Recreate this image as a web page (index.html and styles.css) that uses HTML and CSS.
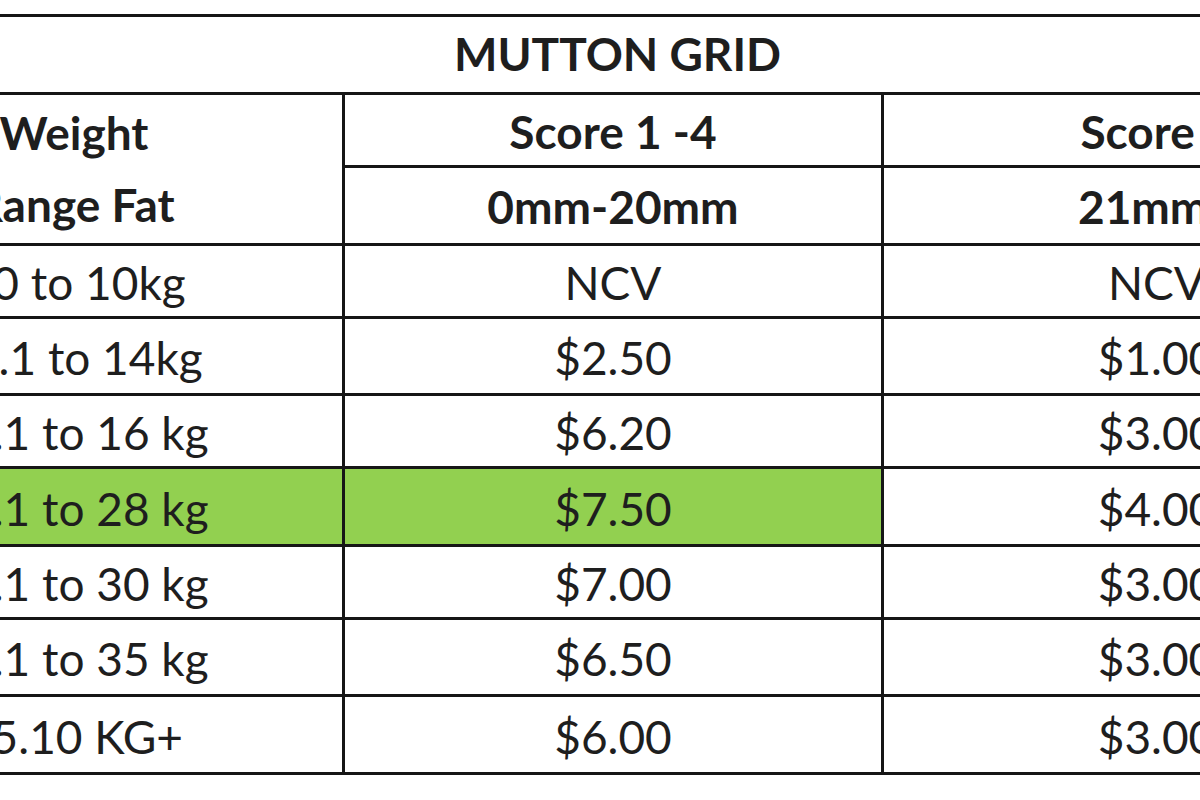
FILE: index.html
```html
<!DOCTYPE html>
<html>
<head>
<meta charset="utf-8">
<link rel="stylesheet" href="styles.css">
</head>
<body>
<table class="grid">
  <colgroup>
    <col class="c1"><col class="c2"><col class="c3">
  </colgroup>
  <tr class="r0"><th colspan="3" class="title">MUTTON GRID</th></tr>
  <tr class="r1">
    <th rowspan="2" class="hw"><div class="hw-line">Weight</div><div class="hw-line">Range Fat</div></th>
    <th>Score 1 -4</th>
    <th>Score 5</th>
  </tr>
  <tr class="r2"><th>0mm-20mm</th><th>21mm+</th></tr>
  <tr class="r3"><td class="w w-first">0 to 10kg</td><td>NCV</td><td>NCV</td></tr>
  <tr class="r4"><td class="w">10.1 to 14kg</td><td>$2.50</td><td>$1.00</td></tr>
  <tr class="r5"><td class="w">14.1 to 16 kg</td><td>$6.20</td><td>$3.00</td></tr>
  <tr class="r6 hl"><td class="w">16.1 to 28 kg</td><td>$7.50</td><td>$4.00</td></tr>
  <tr class="r7"><td class="w">28.1 to 30 kg</td><td>$7.00</td><td>$3.00</td></tr>
  <tr class="r8"><td class="w">30.1 to 35 kg</td><td>$6.50</td><td>$3.00</td></tr>
  <tr class="r9"><td class="w">35.10 KG+</td><td>$6.00</td><td>$3.00</td></tr>
</table>
</body>
</html>
```
FILE: styles.css
```css
html, body {
  margin: 0;
  padding: 0;
  background: #ffffff;
  overflow: hidden;
}
body {
  font-family: Lato, "Liberation Sans", sans-serif;
  color: #1e1e1e;
}
.grid {
  border-collapse: collapse;
  table-layout: fixed;
  width: 1626px;
  margin-left: -197px;
  margin-top: 14px;
  font-size: 46px;
}
.c1 { width: 539px; }
.c2 { width: 539px; }
.c3 { width: 548px; }
.grid th, .grid td {
  border: 3px solid #161616;
  padding: 0;
  text-align: center;
  vertical-align: middle;
  line-height: 1.1;
}
.grid th { font-weight: 700; }
.grid td { font-weight: 400; padding-top: 5px; }
.r1 th, .r2 th { padding-top: 4px; }
.r0 th { height: 75px; }
.r1 th { height: 66px; }
.r2 th { height: 71px; }
.r3 td { height: 65px; }
.r4 td { height: 69px; }
.r5 td { height: 65px; }
.r6 td { height: 70px; }
.r7 td { height: 65px; }
.r8 td { height: 69px; }
.r9 td { height: 70px; }
.grid th.hw { line-height: 1.1; padding-top: 0; }
.hw-line { height: 72px; display: flex; align-items: center; justify-content: center; }
.grid td.w-first { padding-left: 30px; }
.hl td:nth-child(1), .hl td:nth-child(2) { background: #92d050; }
```
